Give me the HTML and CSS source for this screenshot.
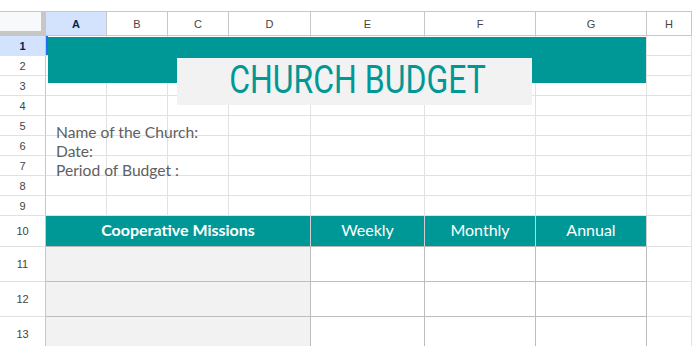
FILE: index.html
```html
<!DOCTYPE html>
<html lang="en">
<head>
    <meta charset="UTF-8">
    <meta name="viewport" content="width=device-width, initial-scale=1.0">
    <title>Church Budget</title>
    <link rel="stylesheet" href="styles.css">
</head>
<body>
    <div class="sheet">
        <!-- column headers -->
        <div class="row head">
            <div class="corner"></div>
            <div class="ch sel">A</div>
            <div class="ch">B</div>
            <div class="ch">C</div>
            <div class="ch">D</div>
            <div class="ch">E</div>
            <div class="ch">F</div>
            <div class="ch">G</div>
            <div class="ch">H</div>
        </div>

        <div class="row">
            <div class="rh sel">1</div>
            <div class="c active"></div><div class="c"></div><div class="c"></div><div class="c"></div>
            <div class="c"></div><div class="c"></div><div class="c"></div><div class="c"></div>
        </div>
        <div class="row">
            <div class="rh">2</div>
            <div class="c"></div><div class="c"></div><div class="c"></div><div class="c"></div>
            <div class="c"></div><div class="c"></div><div class="c"></div><div class="c"></div>
        </div>
        <div class="row">
            <div class="rh">3</div>
            <div class="c"></div><div class="c"></div><div class="c"></div><div class="c"></div>
            <div class="c"></div><div class="c"></div><div class="c"></div><div class="c"></div>
        </div>
        <div class="row">
            <div class="rh">4</div>
            <div class="c"></div><div class="c"></div><div class="c"></div><div class="c"></div>
            <div class="c"></div><div class="c"></div><div class="c"></div><div class="c"></div>
        </div>
        <div class="row">
            <div class="rh">5</div>
            <div class="c"></div><div class="c"></div><div class="c"></div><div class="c"></div>
            <div class="c"></div><div class="c"></div><div class="c"></div><div class="c"></div>
        </div>
        <div class="row">
            <div class="rh">6</div>
            <div class="c"></div><div class="c"></div><div class="c"></div><div class="c"></div>
            <div class="c"></div><div class="c"></div><div class="c"></div><div class="c"></div>
        </div>
        <div class="row">
            <div class="rh">7</div>
            <div class="c"></div><div class="c"></div><div class="c"></div><div class="c"></div>
            <div class="c"></div><div class="c"></div><div class="c"></div><div class="c"></div>
        </div>
        <div class="row">
            <div class="rh">8</div>
            <div class="c"></div><div class="c"></div><div class="c"></div><div class="c"></div>
            <div class="c"></div><div class="c"></div><div class="c"></div><div class="c"></div>
        </div>
        <div class="row">
            <div class="rh">9</div>
            <div class="c"></div><div class="c"></div><div class="c"></div><div class="c"></div>
            <div class="c"></div><div class="c"></div><div class="c"></div><div class="c"></div>
        </div>

        <!-- table header -->
        <div class="row tall">
            <div class="rh">10</div>
            <div class="c th wide bold">Cooperative Missions</div>
            <div class="c th">Weekly</div>
            <div class="c th">Monthly</div>
            <div class="c th">Annual</div>
            <div class="c"></div>
        </div>

        <div class="row line">
            <div class="rh">11</div>
            <div class="c box wide fill"></div>
            <div class="c box"></div><div class="c box"></div><div class="c box"></div>
            <div class="c"></div>
        </div>
        <div class="row line">
            <div class="rh">12</div>
            <div class="c box wide fill"></div>
            <div class="c box"></div><div class="c box"></div><div class="c box"></div>
            <div class="c"></div>
        </div>
        <div class="row line">
            <div class="rh">13</div>
            <div class="c box wide fill"></div>
            <div class="c box"></div><div class="c box"></div><div class="c box"></div>
            <div class="c"></div>
        </div>

        <!-- drawings laid over the grid -->
        <div class="band"></div>
        <div class="title"><span>CHURCH BUDGET</span></div>
        <div class="info">
            Name of the Church:<br>
            Date:<br>
            Period of Budget :
        </div>
    </div>
</body>
</html>
```

FILE: styles.css
```css
body {
    margin: 0;
    background: #fff;
    font-family: "Liberation Sans", Arial, sans-serif;
    overflow: hidden;
}

.sheet {
    position: relative;
    padding-top: 11px;
}

.row {
    display: grid;
    grid-template-columns: 46px 61px 61px 61px 82px 114px 111px 111px 1fr;
    height: 20px;
}

.row > div {
    box-sizing: border-box;
}

.row.head {
    height: 25px;
}

.row.tall {
    height: 31px;
}

.row.line {
    height: 35px;
}

.corner {
    background: #f8f9fa;
    border-top: 1px solid #c7c7c7;
    border-right: 5px solid #c7c7c7;
    border-bottom: 5px solid #c7c7c7;
}

.ch {
    border-top: 1px solid #c7c7c7;
    border-right: 1px solid #c7c7c7;
    border-bottom: 1px solid #c7c7c7;
    display: flex;
    align-items: center;
    justify-content: center;
    font-size: 11px;
    color: #444;
}

.rh {
    border-right: 1px solid #c7c7c7;
    border-bottom: 1px solid #e1e1e1;
    display: flex;
    align-items: center;
    justify-content: center;
    font-size: 11px;
    color: #444;
}

.ch.sel,
.rh.sel {
    background: #d3e3fd;
    color: #0a1f44;
    font-weight: bold;
}

.c {
    border-right: 1px solid #e1e1e1;
    border-bottom: 1px solid #e1e1e1;
}

.c.active {
    box-shadow: inset 2px 0 0 #1a73e8;
}

.wide {
    grid-column: span 4;
}

.th {
    background: #009896;
    border-right-color: #cfcfcf;
    border-bottom-color: #b7b7b7;
    padding-bottom: 3px;
    display: flex;
    align-items: center;
    justify-content: center;
    font-family: Lato, "Liberation Sans", sans-serif;
    font-size: 16px;
    color: #fff;
}

.th.bold {
    font-weight: bold;
}

.box {
    border-right-color: #bdbdbd;
    border-bottom-color: #bdbdbd;
}

.box.fill {
    background: #f2f2f2;
}

.band {
    position: absolute;
    left: 48px;
    top: 37px;
    width: 598px;
    height: 46px;
    background: #009896;
}

.title {
    position: absolute;
    left: 177px;
    top: 58px;
    width: 355px;
    height: 47px;
    box-sizing: border-box;
    padding: 0 0 4px 5px;
    background: #f2f2f2;
    display: flex;
    align-items: center;
    justify-content: center;
    font-family: Roboto, "Liberation Sans", sans-serif;
    font-size: 39px;
    color: #009896;
}

.title span {
    display: inline-block;
    transform: scaleX(0.82);
    white-space: nowrap;
}

.info {
    position: absolute;
    left: 56px;
    top: 123px;
    font-family: Lato, "Liberation Sans", sans-serif;
    font-size: 15.6px;
    line-height: 19px;
    color: #5f5f5f;
}
```
